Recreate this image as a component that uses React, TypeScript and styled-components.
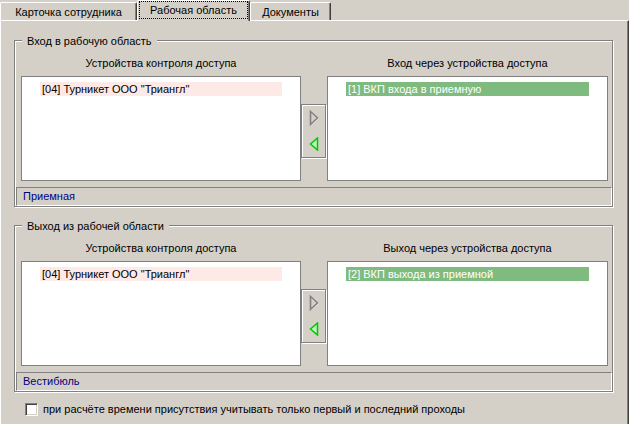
import React from 'react';
import styled, { createGlobalStyle } from 'styled-components';

const GlobalStyle = createGlobalStyle`
  html, body { margin: 0; padding: 0; background: #d4d0c8; }
  body {
    font-family: "Liberation Sans", Arial, sans-serif;
    font-size: 11px;
    color: #000;
  }
`;

const Window = styled.div`
  width: 629px;
  height: 424px;
  overflow: hidden;
  background: #d4d0c8;
  display: flex;
  flex-direction: column;
`;

const TabStrip = styled.div`
  display: flex;
  align-items: flex-end;
  height: 20px;
  position: relative;
  z-index: 1;
`;

const Tab = styled.div<{ $active?: boolean; $w: number }>`
  box-sizing: border-box;
  width: ${p => p.$w}px;
  height: ${p => (p.$active ? 21 : 18)}px;
  margin-bottom: ${p => (p.$active ? -1 : 0)}px;
  background: #d4d0c8;
  border-top: 1px solid #fff;
  border-left: 1px solid #fff;
  border-right: 1px solid #404040;
  box-shadow: inset -1px 0 0 #808080;
  border-radius: 2px 2px 0 0;
  display: flex;
  justify-content: center;
  align-items: flex-start;
  padding-top: ${p => (p.$active ? 0 : 3)}px;
  line-height: 13px;
  white-space: nowrap;
`;

const FocusLabel = styled.span`
  flex: 1;
  margin: 0 1px 0 1px;
  border: 1px dotted #000;
  padding: 1px 0;
  line-height: 14px;
  text-align: center;
`;

const Panel = styled.div`
  flex: 1;
  box-sizing: border-box;
  width: 629px;
  border-top: 1px solid #fff;
  border-left: 1px solid #fff;
  border-right: 1px solid #404040;
  box-shadow: inset -1px 0 0 #808080;
  padding: 19px 0 0 13px;
  display: flex;
  flex-direction: column;
`;

const Group = styled.div`
  position: relative;
  box-sizing: border-box;
  width: 599px;
  height: 167px;
  border: 1px solid #808080;
  box-shadow: inset 1px 1px 0 #fff, 1px 1px 0 #fff;
  padding: 1px 0 0 1px;
  display: flex;
  flex-direction: column;
  & + & {
    margin-top: 18px;
  }
`;

const Caption = styled.span`
  position: absolute;
  left: 7px;
  top: -7px;
  padding: 0 5px;
  background: #d4d0c8;
  line-height: 14px;
  white-space: nowrap;
`;

const Columns = styled.div`
  display: grid;
  grid-template-columns: 280px 26px 281px;
  padding-left: 5px;
`;

const LabelRow = styled(Columns)`
  padding-top: 14px;
  height: 14px;
  margin-bottom: 6px;
  line-height: 14px;
`;

const ColumnLabel = styled.div<{ $col: number }>`
  grid-column: ${p => p.$col};
  text-align: center;
  white-space: nowrap;
`;

const ListBox = styled.div`
  box-sizing: border-box;
  height: 105px;
  background: #fff;
  border: 1px solid #808080;
  padding: 5px 18px 0 18px;
`;

const ListItem = styled.div<{ $variant: 'source' | 'target' }>`
  height: 14px;
  line-height: 14px;
  padding-left: 2px;
  white-space: nowrap;
  background: ${p => (p.$variant === 'source' ? '#fde9e6' : '#7fbb7f')};
  color: ${p => (p.$variant === 'source' ? '#000' : '#fff')};
`;

const ButtonBox = styled.div`
  box-sizing: border-box;
  margin-top: 28px;
  height: 54px;
  border: 1px solid #808080;
  box-shadow: inset 1px 1px 0 #fff, 1px 1px 0 #fff;
  display: flex;
  flex-direction: column;
  align-self: start;
  width: 25px;
`;

const ArrowButton = styled.div`
  flex: 1;
  display: flex;
  align-items: center;
  justify-content: center;
`;

const StatusBar = styled.div`
  margin-top: 6px;
  box-sizing: border-box;
  height: 19px;
  border-top: 1px solid #808080;
  border-left: 1px solid #808080;
  border-bottom: 1px solid #fff;
  border-right: 1px solid #fff;
  color: #000080;
  padding-left: 6px;
  line-height: 17px;
`;

const CheckRow = styled.label`
  display: flex;
  align-items: center;
  margin: 11px 0 0 11px;
  gap: 5px;
  line-height: 13px;
  white-space: nowrap;
`;

const CheckBox = styled.span`
  box-sizing: border-box;
  width: 13px;
  height: 13px;
  background: #fff;
  border-top: 1px solid #808080;
  border-left: 1px solid #808080;
  border-bottom: 1px solid #fff;
  border-right: 1px solid #fff;
  box-shadow: inset 1px 1px 0 #404040, inset -1px -1px 0 #d4d0c8;
`;

const RightArrow = () => (
  <svg width="10" height="17" viewBox="0 0 10 17">
    <path d="M2 2.5 L9 8.5 L2 14.5" fill="none" stroke="#fff" strokeWidth="1.2" />
    <path d="M1.5 1.5 L8.5 8 L1.5 14.5 Z" fill="none" stroke="#808080" strokeWidth="1.6" strokeLinejoin="miter" />
  </svg>
);

const LeftArrow = () => (
  <svg width="10" height="14" viewBox="0 0 10 14">
    <path d="M8.5 1 L1.5 7 L8.5 13 Z" fill="#b8f8b8" stroke="#00c800" strokeWidth="1.5" />
  </svg>
);

type GroupProps = {
  title: string;
  rightLabel: string;
  source: string;
  target: string;
  zone: string;
};

const TransferGroup = ({ title, rightLabel, source, target, zone }: GroupProps) => (
  <Group>
    <Caption>{title}</Caption>
    <LabelRow>
      <ColumnLabel $col={1}>Устройства контроля доступа</ColumnLabel>
      <ColumnLabel $col={3}>{rightLabel}</ColumnLabel>
    </LabelRow>
    <Columns>
      <ListBox>
        <ListItem $variant="source">{source}</ListItem>
      </ListBox>
      <ButtonBox>
        <ArrowButton>
          <RightArrow />
        </ArrowButton>
        <ArrowButton>
          <LeftArrow />
        </ArrowButton>
      </ButtonBox>
      <ListBox>
        <ListItem $variant="target">{target}</ListItem>
      </ListBox>
    </Columns>
    <StatusBar>{zone}</StatusBar>
  </Group>
);

export default function App() {
  return (
    <Window>
      <GlobalStyle />
      <TabStrip>
        <Tab $w={137}>Карточка сотрудника</Tab>
        <Tab $w={113} $active>
          <FocusLabel>Рабочая область</FocusLabel>
        </Tab>
        <Tab $w={81}>Документы</Tab>
      </TabStrip>
      <Panel>
        <TransferGroup
          title="Вход в рабочую область"
          rightLabel="Вход через устройства доступа"
          source={'[04] Турникет ООО "Триангл"'}
          target="[1] ВКП входа в приемную"
          zone="Приемная"
        />
        <TransferGroup
          title="Выход из рабочей области"
          rightLabel="Выход через устройства доступа"
          source={'[04] Турникет ООО "Триангл"'}
          target="[2] ВКП выхода из приемной"
          zone="Вестибюль"
        />
        <CheckRow>
          <CheckBox />
          при расчёте времени присутствия учитывать только первый и последний проходы
        </CheckRow>
      </Panel>
    </Window>
  );
}
